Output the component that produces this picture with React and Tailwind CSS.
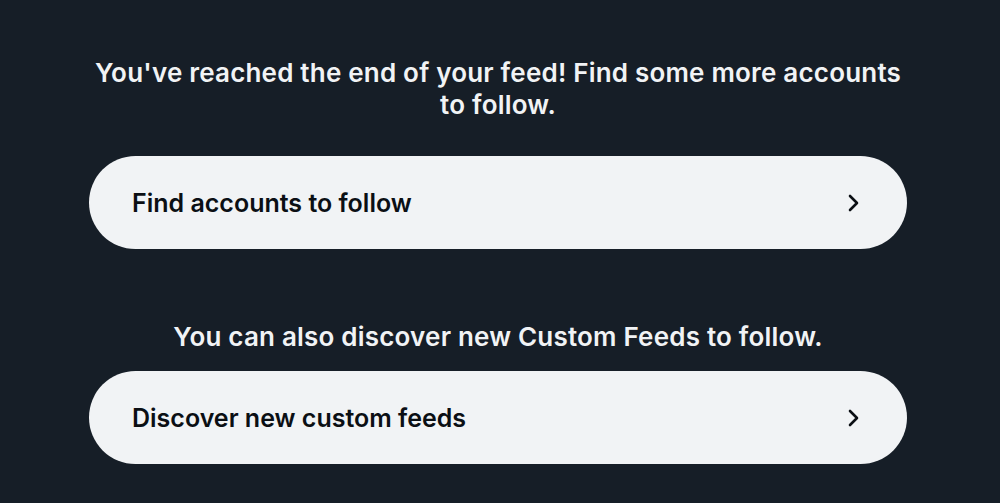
const Chevron = () => (
  <svg width="16" height="18" viewBox="0 0 16 18" fill="none">
    <polyline
      points="4,2 11,9 4,16"
      stroke="#0b0f14"
      strokeWidth="2.6"
      strokeLinecap="round"
      strokeLinejoin="round"
    />
  </svg>
);

const LinkButton = ({ label }) => (
  <button className="flex h-[93px] w-full items-center justify-between rounded-full bg-[#f1f3f5] pl-[43px] pr-[45px] text-left">
    <span className="text-[25px] font-semibold leading-8 text-[#0b0f14]">
      {label}
    </span>
    <Chevron />
  </button>
);

export default function App() {
  return (
    <div
      className="h-[503px] w-[1000px] overflow-hidden bg-[#161e27] pl-[89px] pr-[93px] pt-[57px]"
      style={{ fontFamily: "Inter, 'Noto Sans', sans-serif" }}
    >
      <p className="text-center text-[26px] font-semibold leading-8 tracking-[0.2px] text-[#f1f3f5]">
        You've reached the end of your feed! Find some more accounts to follow.
      </p>
      <div className="mt-[35px]">
        <LinkButton label="Find accounts to follow" />
      </div>
      <p className="mt-[72px] text-center text-[26px] font-semibold leading-8 tracking-[0.2px] text-[#f1f3f5]">
        You can also discover new Custom Feeds to follow.
      </p>
      <div className="mt-[18px]">
        <LinkButton label="Discover new custom feeds" />
      </div>
    </div>
  );
}
